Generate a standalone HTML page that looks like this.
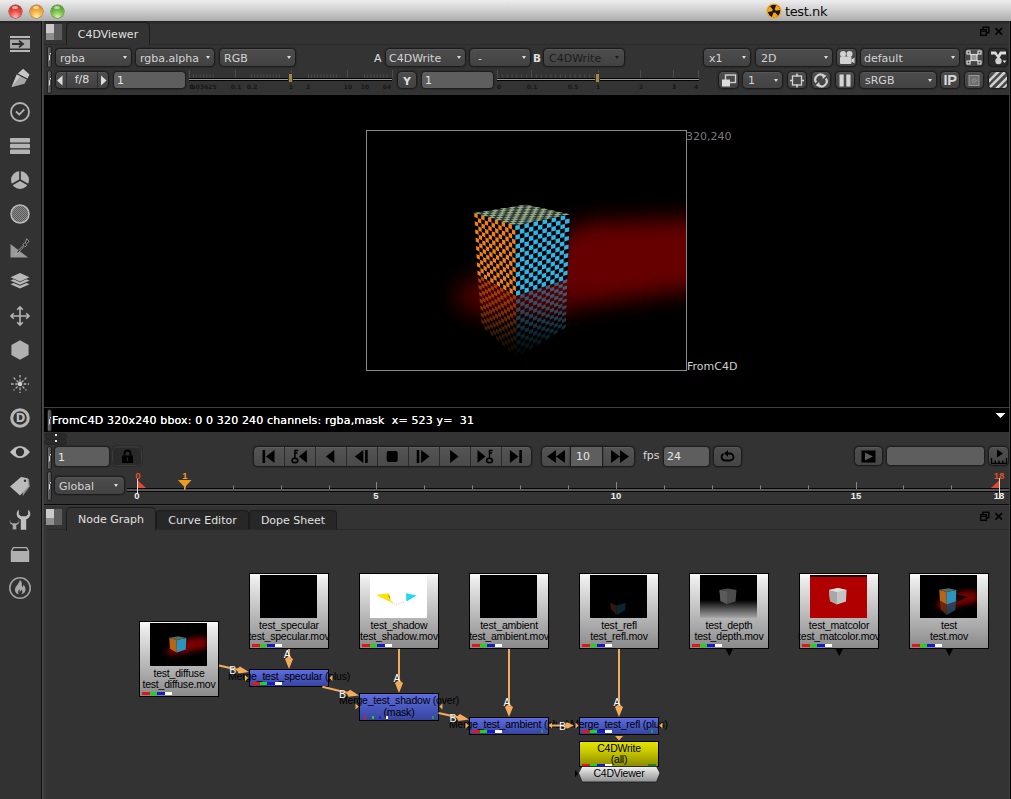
<!DOCTYPE html>
<html><head><meta charset="utf-8"><title>test.nk</title>
<style>
*{box-sizing:border-box;margin:0;padding:0}
html,body{width:1011px;height:799px;overflow:hidden;background:#333}
body{position:relative;font-family:"DejaVu Sans","Liberation Sans",sans-serif;font-size:11px;color:#d2d2d2}
.abs{position:absolute}
#title{position:absolute;left:0;top:0;width:1011px;height:21px;background:linear-gradient(#ededed,#d2d2d2 45%,#acacac)}
#title .t{position:absolute;left:785px;top:4px;font-size:13px;letter-spacing:-.4px;color:#0c0c0c;line-height:16px}
.light{position:absolute;top:4.5px;width:13px;height:13px;border-radius:50%}.light:after{content:"";position:absolute;left:3.5px;top:1px;width:6px;height:3.5px;border-radius:50%;background:rgba(255,255,255,.55);filter:blur(.6px)}
#main{position:absolute;left:0;top:21px;width:1011px;height:778px;background:#333}
#lbar{position:absolute;left:0;top:21px;width:41px;height:778px;background:linear-gradient(#222 0,#2a2a2a 2px,#323232 3.5px)}
#ldiv{position:absolute;left:41px;top:21px;width:1px;height:778px;background:#0e0e0e}
#ldiv2{position:absolute;left:42px;top:21px;width:5px;height:778px;background:linear-gradient(90deg,#484848 0,#484848 1px,#404040 1px,#404040 2px,#363636 2px)}
.dd,.btn{position:absolute;height:18px;border:1px solid #1b1b1b;border-radius:4.5px;background:linear-gradient(#4d4d4d,#424242);line-height:17px;color:#d4d4d4;white-space:nowrap;box-shadow:inset 0 1px 0 rgba(255,255,255,.06),0 0 1.5px rgba(0,0,0,.7)}
.dd span{position:absolute;left:4px;top:0}
.dd i{position:absolute;right:4px;top:7px;width:0;height:0;border-left:2.5px solid transparent;border-right:2.5px solid transparent;border-top:3px solid #dcdcdc}
.dd.dis{color:#1c1c1c}
.dd.dis i{border-top-color:#1c1c1c}
.inp{position:absolute;height:18px;border:1px solid #1e1e1e;box-shadow:0 0 1.5px rgba(0,0,0,.6);border-radius:4px;background:#5e5e5e;line-height:18px;color:#e6e6e6;padding-left:3px;white-space:nowrap}
.lbl{position:absolute;line-height:18px;color:#e0e0e0;white-space:nowrap}
.grip{position:absolute;width:5px;margin-left:1px;border-radius:3px;background:linear-gradient(90deg,#6c6c6c,#454545);border:1px solid #1e1e1e}
.grip:after{content:"";position:absolute;left:0px;top:50%;width:3px;height:8px;margin-top:-4px;background:linear-gradient(100deg,transparent 40%,#ddd 45%,#ddd 60%,transparent 65%)}
.tab{position:absolute;white-space:nowrap;text-align:center;color:#e0e0e0}
svg{position:absolute;overflow:visible}
.ntext{font-family:"Liberation Sans",sans-serif;font-size:10px;fill:#000;text-anchor:middle}
.tick{font-size:6px;color:#171717;font-weight:bold;position:absolute;white-space:nowrap;transform:translateX(-50%);line-height:8px}
.tl{position:absolute;font-family:"Liberation Sans",sans-serif;font-size:9.5px;font-weight:bold;color:#eee;transform:translateX(-50%);line-height:10px}
</style></head><body>
<div id="main"></div>
<div id="title">
<div class="light" style="left:8.5px;background:radial-gradient(circle at 50% 90%,#ffb4b0 0%,#ee4a44 45%,#b8201c 100%);box-shadow:0 0 0 .5px #8c2a26"></div>
<div class="light" style="left:29.5px;background:radial-gradient(circle at 50% 90%,#fff0a0 0%,#f6b040 45%,#d07418 100%);box-shadow:0 0 0 .5px #9a6420"></div>
<div class="light" style="left:50.5px;background:radial-gradient(circle at 50% 90%,#d4f4a8 0%,#78c048 45%,#3c8a22 100%);box-shadow:0 0 0 .5px #3a7424"></div>
<svg style="left:765.5px;top:2.700px" width="16" height="16" viewBox="0 0 16 16"><circle cx="8" cy="8" r="7.6" fill="#f3a51c"/><circle cx="8" cy="8" r="6.2" fill="#1a1408"/><path transform="rotate(20 8 8)" d="M8 8 L8 1.8 A6.2 6.2 0 0 1 13.4 4.9 Z M8 8 L13.4 11.1 A6.2 6.2 0 0 1 8 14.2 Z M8 8 L2.6 11.1 A6.2 6.2 0 0 1 2.6 4.9 Z" fill="#f3a51c"/><circle cx="8" cy="8" r="1.7" fill="#1a1408"/></svg>
<div class="t">test.nk</div>
</div>
<div id="lbar"></div><div id="ldiv"></div><div id="ldiv2"></div>
<!-- left toolbar icons -->
<svg style="left:8px;top:32px" width="24" height="24" viewBox="0 0 24 24"><g fill="#b8b8b8"><rect x="2" y="4" width="20" height="2"/><rect x="2" y="7.5" width="20" height="9" fill="#a8a8a8"/><rect x="2" y="18" width="20" height="2"/></g><path d="M4 12h10M11 8.8l4 3.2-4 3.2" stroke="#2e2e2e" stroke-width="1.8" fill="none"/></svg>
<svg style="left:8px;top:66px" width="24" height="24" viewBox="0 0 24 24"><path d="M9.800 7.400l5.400-4.600 6.300 5.800-2 3.800z" fill="#c6c6c6"/><path d="M8.800 8.600l10 4.800-2.300 4.400L3.500 21.200z" fill="#a6a6a6"/><path d="M8.800 8.600l3.600 1.700L3.500 21.200z" fill="#c8c8c8"/></svg>
<svg style="left:8px;top:100px" width="24" height="24" viewBox="0 0 24 24"><circle cx="12" cy="12" r="9" fill="none" stroke="#b4b4b4" stroke-width="1.8"/><path d="M8 11.5l3.3 3 5-5.2" stroke="#b4b4b4" stroke-width="1.8" fill="none"/></svg>
<svg style="left:8px;top:134px" width="24" height="24" viewBox="0 0 24 24"><g fill="#b4b4b4"><rect x="2" y="4" width="20" height="4.4" rx=".8"/><rect x="2" y="9.8" width="20" height="4.4" rx=".8"/><rect x="2" y="15.6" width="20" height="4.4" rx=".8"/></g></svg>
<svg style="left:8px;top:168px" width="24" height="24" viewBox="0 0 24 24"><circle cx="12" cy="12" r="9" fill="#b4b4b4"/><path d="M12 3v9l-7.8 4.5M12 12l7.8 4.5" stroke="#2e2e2e" stroke-width="1.6" fill="none"/></svg>
<svg style="left:8px;top:202px" width="24" height="24" viewBox="0 0 24 24"><defs><pattern id="ht" width="2" height="2" patternUnits="userSpaceOnUse"><rect width="2" height="2" fill="#8a8a8a"/><rect width="1" height="1" fill="#5a5a5a"/><rect x="1" y="1" width="1" height="1" fill="#5a5a5a"/></pattern></defs><circle cx="12" cy="12" r="9" fill="url(#ht)" stroke="#bcbcbc" stroke-width="1.5"/></svg>
<svg style="left:8px;top:236px" width="24" height="24" viewBox="0 0 24 24"><path d="M2.500 8v13.500h17.500z" fill="#9a9a9a"/><path d="M18.600 2.800l2.400 2.400-2.800 3.200.7.700-1.500 1.500-.8-.8-6 6.500-3 2 1.800-3.200 6.500-6-.8-.8 1.500-1.500.7.700z" fill="#1c1c1c" stroke="#c8c8c8" stroke-width=".7"/></svg>
<svg style="left:8px;top:270px" width="24" height="24" viewBox="0 0 24 24"><g fill="#b8b8b8"><path d="M12 3l9.5 4.2L12 11.4 2.500 7.2z"/><path d="M2.500 10.600l3-1.300 6.500 2.900 6.500-2.900 3 1.300-9.500 4.200z"/><path d="M2.500 14.200l3-1.300 6.500 2.900 6.500-2.900 3 1.300-9.500 4.200z"/></g></svg>
<svg style="left:8px;top:304px" width="24" height="24" viewBox="0 0 24 24"><path d="M12 3v18M3 12h18M9.200 5.800L12 3l2.800 2.800M9.200 18.200L12 21l2.800-2.800M5.800 9.200L3 12l2.800 2.800M18.200 9.200L21 12l-2.800 2.800" stroke="#b4b4b4" stroke-width="1.6" fill="none"/></svg>
<svg style="left:8px;top:338px" width="24" height="24" viewBox="0 0 24 24"><path d="M12 2.200l8.600 4.900v9.800L12 21.800l-8.600-4.900V7.100z" fill="#b0b0b0"/></svg>
<svg style="left:8px;top:372px" width="24" height="24" viewBox="0 0 24 24"><g stroke="#b4b4b4" stroke-width="1.300" stroke-dasharray="2.600 1.600"><path d="M12 3v18M3 12h18M5.600 5.600l12.800 12.800M18.400 5.600L5.600 18.400"/></g><circle cx="12" cy="12" r="2.200" fill="#d0d0d0"/></svg>
<svg style="left:8px;top:406px" width="24" height="24" viewBox="0 0 24 24"><circle cx="12" cy="12" r="8.300" fill="none" stroke="#b6b6b6" stroke-width="3"/><text x="12.400" y="16.300" font-family="DejaVu Sans,sans-serif" font-weight="bold" font-size="11.500" text-anchor="middle" fill="#bcbcbc">D</text></svg>
<svg style="left:8px;top:440px" width="24" height="24" viewBox="0 0 24 24"><path d="M2 12q10-12 20 0q-10 12-20 0z" fill="#c0c0c0"/><circle cx="12" cy="12" r="4.200" fill="#2e2e2e"/></svg>
<svg style="left:8px;top:474px" width="24" height="24" viewBox="0 0 24 24"><path d="M14 3.500l7 1.500.8 7.500-7 9.500z" fill="#8e8e8e"/><path d="M2 12.500L13 3l6.500 1.200 1 8L12 21.500z" fill="#bcbcbc"/><circle cx="17" cy="6.800" r="1.200" fill="#2e2e2e"/></svg>
<svg style="left:8px;top:508px" width="24" height="24" viewBox="0 0 24 24"><path d="M10.800 1.800C8.200 3.600 7.800 8 10.800 10.200L12.800 11.400V21.700H18.200V11.400L20.200 10.200C23.200 8 22.800 3.600 20.200 1.800V6.600L17.800 8.200H13.200L10.800 6.600Z" fill="#c0c0c0"/><path d="M2.600 11C1 12.600 1.200 15.400 3.200 16.600L4.400 17.200V21.700H8.600V17.200L9.800 16.600C11.800 15.400 12 12.600 10.400 11V14L8.600 15H4.400L2.600 14Z" fill="#a8a8a8" stroke="#323232" stroke-width=".6"/></svg>
<svg style="left:8px;top:542px" width="24" height="24" viewBox="0 0 24 24"><path d="M5 5h14l2.200 4v11H2.800V9z" fill="#b0b0b0"/><path d="M5.800 6.200h12.400l1.500 2.800H4.300z" fill="#2e2e2e"/></svg>
<svg style="left:8px;top:576px" width="24" height="24" viewBox="0 0 24 24"><circle cx="12" cy="12" r="10.200" fill="none" stroke="#a0a0a0" stroke-width="1.600"/><path d="M12.500 4.500c2.500 3 .5 4.500 2 6.500.8-.6 1-1.700.8-2.600 2.600 2.400 3 6.200.9 8.400-.9.900-2 1.400-3 1.500 1.500-1.200 1.600-3.200.2-4.800-.3 1.400-1.100 1.800-1.600 2.600-.4-.9-.3-2 .1-3-1.600 1-2.500 3.200-1.200 5.200-2.200-.4-4.200-2.600-3.600-5.600.5-2.700 3.600-4.200 4.400-8.200z" fill="#a8a8a8"/></svg>
<!-- viewer panel header -->
<div class="abs" style="left:44px;top:21px;width:966px;height:24px;background:linear-gradient(#232323 0,#2a2a2a 2px,#333 3.5px)"></div><div class="abs" style="left:44px;top:44px;width:965px;height:1px;background:#2a2a2a"></div>
<div class="abs" style="left:1009px;top:21px;width:1px;height:778px;background:#404040"></div><div class="abs" style="left:1010px;top:21px;width:1px;height:778px;background:#040404"></div>
<div class="abs" style="left:46px;top:24px;width:16px;height:16px;background:#5c5c5c"><div class="abs" style="left:0;top:0;width:8px;height:9px;background:#cacaca"></div><div class="abs" style="left:0;top:9px;width:8px;height:7px;background:#8e8e8e"></div></div>
<div class="tab" style="left:66px;top:22px;width:84px;height:24px;background:#333;border:1px solid #1c1c1c;border-bottom:none;border-radius:5px 5px 0 0;line-height:23px">C4DViewer</div>
<div class="abs" style="left:44px;top:45px;width:965px;height:50px;background:#333"></div>
<svg style="left:979px;top:26px" width="26" height="11" viewBox="0 0 26 11"><g fill="none" stroke="#050505" stroke-width="1.500"><path d="M4 3V1.200h5.800v5.600H8"/><rect x="1.700" y="3.700" width="5.600" height="5.600"/><path d="M1.700 5.400h5.600" stroke-width="1"/><path d="M16.500 2.200l6.500 6.500M23 2.200l-6.500 6.500" stroke-width="1.700"/></g></svg>
<div class="grip" style="left:46px;top:46px;height:22px"></div>
<div class="grip" style="left:46px;top:70px;height:24px"></div>
<!-- row 1 -->
<div class="dd" style="left:55px;top:48px;height:19px;line-height:19px;width:77px"><span>rgba</span><i></i></div>
<div class="dd" style="left:135px;top:48px;height:19px;line-height:19px;width:80px"><span style="left:4px">rgba.alpha</span><i style="right:4px"></i></div>
<div class="dd" style="left:219px;top:48px;height:19px;line-height:19px;width:77px"><span>RGB</span><i></i></div>
<div class="lbl" style="left:374px;top:49px;line-height:19px">A</div>
<div class="dd" style="left:385px;top:48px;height:19px;line-height:19px;width:81px"><span style="left:3px">C4DWrite</span><i></i></div>
<div class="dd" style="left:469px;top:48px;height:19px;line-height:19px;width:62px"><span style="left:8px">-</span><i></i></div>
<div class="lbl" style="left:533px;top:49px;line-height:19px;font-weight:bold;font-size:10.5px">B</div>
<div class="dd dis" style="left:543px;top:48px;height:19px;line-height:19px;width:82px"><span style="left:5px">C4DWrite</span><i style="right:5px"></i></div>
<div class="dd" style="left:703px;top:48px;height:19px;line-height:19px;width:48px"><span style="left:5px">x1</span><i></i></div>
<div class="dd" style="left:755px;top:48px;height:19px;line-height:19px;width:78px"><span style="left:5px">2D</span><i></i></div>
<div class="btn" style="left:836px;top:48px;height:19px;line-height:19px;width:21px"><svg style="left:1px;top:1px" width="17" height="15" viewBox="0 0 17 15"><g fill="#d2d2d2"><circle cx="5" cy="4" r="3"/><circle cx="11.500" cy="4" r="3"/><rect x="2" y="6.500" width="11.500" height="7.500" rx="1"/><path d="M13.500 9.500l3-2v6l-3-2z"/></g></svg></div>
<div class="dd" style="left:860px;top:48px;height:19px;line-height:19px;width:100px"><span style="left:3px">default</span><i></i></div>
<div class="btn" style="left:964px;top:48px;height:19px;line-height:19px;width:20px"><svg style="left:1px;top:1px" width="16" height="15" viewBox="0 0 16 15"><g fill="none" stroke="#d8d8d8" stroke-width="1.200"><rect x="5" y="4.500" width="6" height="6" fill="#9a9a9a"/><rect x="1" y="1" width="3" height="3"/><rect x="12" y="1" width="3" height="3"/><rect x="1" y="11" width="3" height="3"/><rect x="12" y="11" width="3" height="3"/><path d="M4 4l1.500 1M12 4l-1.500 1M4 11l1.500-1M12 11l-1.500-1"/></g></svg></div>
<div class="btn" style="left:988px;top:48px;height:19px;line-height:19px;width:20px;background:#2a2a2a"><svg style="left:1px;top:1px" width="17" height="15" viewBox="0 0 17 15"><path d="M1 1.500h5l2 3.500 2-3.500h6v3h-4.500L9.500 8v1.500h-2V8L5 4.500H1z" fill="#dcdcdc"/><circle cx="8.500" cy="11" r="3.200" fill="#d0d0d0"/><path d="M12.500 10.500h4l-2 2.500z" fill="#dcdcdc"/></svg></div>
<!-- row 2 -->
<div class="btn" style="left:55px;top:71px;width:54px"></div>
<div class="abs" style="left:66px;top:72px;width:1px;height:16px;background:#2c2c2c"></div>
<div class="abs" style="left:97px;top:72px;width:1px;height:16px;background:#2c2c2c"></div>
<svg style="left:56px;top:75px" width="52" height="11" viewBox="0 0 52 11"><path d="M1 5.500l5.500-5v10zM50.500 5.500l-5.500-5v10z" fill="#dedede"/></svg>
<div class="lbl" style="left:67px;top:71px;width:30px;text-align:center">f/8</div>
<div class="inp" style="left:113px;top:71px;width:73px">1</div>
<div class="btn" style="left:397px;top:71px;width:20px"><div class="lbl" style="left:0;top:1px;width:18px;text-align:center;font-size:10.5px;font-weight:bold;line-height:16px">Y</div></div>
<div class="inp" style="left:421px;top:71px;width:73px">1</div>
<div class="btn" style="left:718px;top:71px;width:21px"><svg style="left:1px;top:1px" width="17" height="15" viewBox="0 0 17 15"><rect x="5.500" y="2" width="10" height="7.500" fill="none" stroke="#d0d0d0" stroke-width="1.400"/><rect x="2" y="6.500" width="8" height="7" fill="#dcdcdc"/></svg></div>
<div class="dd" style="left:742px;top:71px;width:41px"><span style="left:5px">1</span><i></i></div>
<div class="btn" style="left:787px;top:71px;width:20px"><svg style="left:1px;top:1px" width="16" height="15" viewBox="0 0 16 15"><rect x="3.500" y="3" width="9" height="9" fill="none" stroke="#d4d4d4" stroke-width="1.300"/><path d="M8 .5v3M8 11.500v3M1 7.500h3M12 7.500h3" stroke="#d4d4d4" stroke-width="1.600"/></svg></div>
<div class="btn" style="left:811px;top:71px;width:20px"><svg style="left:1px;top:1px" width="16" height="15" viewBox="0 0 16 15"><g fill="none" stroke="#d0d0d0" stroke-width="2.200"><path d="M3.200 9.500A5 5 0 0 1 10.500 2.800"/><path d="M12.800 5.500A5 5 0 0 1 5.500 12.200"/></g><path d="M9 .5l4.500 2.200L9.800 6zM7 14.500L2.500 12.300 6.200 9z" fill="#d0d0d0"/></svg></div>
<div class="btn" style="left:835px;top:71px;width:20px"><svg style="left:1px;top:1px" width="16" height="15" viewBox="0 0 16 15"><rect x="2.500" y="1.500" width="4.200" height="12" fill="#d4d4d4"/><rect x="9.300" y="1.500" width="4.200" height="12" fill="#d4d4d4"/></svg></div>
<div class="dd" style="left:859px;top:71px;width:78px"><span style="left:5px">sRGB</span><i></i></div>
<div class="btn" style="left:940px;top:71px;width:20px"><div class="lbl" style="left:0;top:-1px;width:18px;text-align:center;font-weight:bold;font-size:14.5px;letter-spacing:-.3px;color:#d8d8d8;font-family:'Liberation Sans',sans-serif">IP</div></div>
<div class="btn" style="left:964px;top:71px;width:20px"><svg style="left:1px;top:1px" width="16" height="15" viewBox="0 0 16 15"><rect x="3" y="2.500" width="10" height="10" fill="#6e6e6e" stroke="#9a9a9a" stroke-width="1"/><path d="M6 10l4-5M8 10.500l3-3.800M5.500 8l2.500-3" stroke="#9a9a9a" stroke-width=".8"/></svg></div>
<div class="btn" style="left:988px;top:71px;width:20px;overflow:hidden"><svg style="left:1px;top:1px" width="16" height="15" viewBox="0 0 16 15"><g stroke="#cfcfcf" stroke-width="2.600"><path d="M-2 9L9 -2M-1 15L15 -1M5 17L18 4M11 18L19 10"/></g></svg></div>
<!-- sliders -->
<div class="abs" style="left:189px;top:78px;width:203px;height:3px;background:#9a9a9a;border-top:1px solid #050505;border-bottom:1px solid #050505"></div>
<svg style="left:0;top:0" width="1011" height="100"><path d="M193.5 74.5V78M196.8 74.5V78M200.1 74.5V78M203.4 74.5V78M206.7 74.5V78M210.0 74.5V78M213.3 74.5V78M251.5 74.5V78M254.6 74.5V78M257.7 74.5V78M260.8 74.5V78M263.9 74.5V78M267.0 74.5V78M270.1 74.5V78M273.2 74.5V78M276.3 74.5V78M279.4 74.5V78M308.5 74.5V78M311.6 74.5V78M314.7 74.5V78M317.8 74.5V78M320.9 74.5V78M324.0 74.5V78M327.1 74.5V78M330.2 74.5V78M333.3 74.5V78M336.4 74.5V78M364.5 74.5V78M367.7 74.5V78M370.9 74.5V78M374.1 74.5V78M377.3 74.5V78M380.5 74.5V78M383.7 74.5V78M386.9 74.5V78M189.5 70V78M235.5 70V78M291.5 70V78M347.5 70V78M392.5 70V78" stroke="#4c4c4c" stroke-width="1" fill="none"/></svg>
<div class="abs" style="left:288px;top:73px;width:5px;height:10px;background:#9b8550;border:1px solid #3a3018;border-radius:1px"></div>
<div class="tick" style="left:193px;top:83px">0</div>
<div class="tick" style="left:203px;top:83px">0.03625</div>
<div class="tick" style="left:236px;top:83px">0.1</div>
<div class="tick" style="left:252px;top:83px">0.2</div>
<div class="tick" style="left:291px;top:83px">1</div>
<div class="tick" style="left:308px;top:83px">2</div>
<div class="tick" style="left:348px;top:83px">10</div>
<div class="tick" style="left:365px;top:83px">20</div>
<div class="tick" style="left:387px;top:83px">64</div>
<div class="abs" style="left:497px;top:78px;width:202px;height:3px;background:#9a9a9a;border-top:1px solid #050505;border-bottom:1px solid #050505"></div>
<svg style="left:0;top:0" width="1011" height="100"><path d="M502.4 74.5V78M507.2 74.5V78M512.1 74.5V78M516.9 74.5V78M521.8 74.5V78M526.6 74.5V78M531.5 74.5V78M536.3 74.5V78M541.2 74.5V78M546.0 74.5V78M550.9 74.5V78M555.7 74.5V78M560.6 74.5V78M565.4 74.5V78M570.3 74.5V78M575.1 74.5V78M580.0 74.5V78M584.8 74.5V78M589.7 74.5V78M594.5 74.5V78M497.5 70V78M531.5 70V78M598.5 70V78M640.5 70V78M673.5 70V78M698.5 70V78" stroke="#4c4c4c" stroke-width="1" fill="none"/></svg>
<div class="abs" style="left:595px;top:73px;width:5px;height:10px;background:#9b8550;border:1px solid #3a3018;border-radius:1px"></div>
<div class="tick" style="left:499px;top:83px">0</div>
<div class="tick" style="left:532px;top:83px">0.1</div>
<div class="tick" style="left:573px;top:83px">0.5</div>
<div class="tick" style="left:598px;top:83px">1</div>
<div class="tick" style="left:641px;top:83px">2</div>
<div class="tick" style="left:674px;top:83px">3</div>
<div class="tick" style="left:696px;top:83px">4</div>
<!-- viewer -->
<div class="abs" style="left:44px;top:95px;width:965px;height:312px;background:#000"></div>
<div class="abs" style="left:44px;top:407px;width:965px;height:1px;background:#404040"></div>
<div class="abs" style="left:44px;top:408px;width:965px;height:24px;background:#000"></div>
<svg style="left:0;top:0" width="1011" height="799" viewBox="0 0 1011 799">
<defs>
<clipPath id="fr"><rect x="366.5" y="130.5" width="320" height="240"/></clipPath>
<filter id="b8" x="-30%" y="-50%" width="160%" height="200%"><feGaussianBlur stdDeviation="11"/></filter>
<filter id="b1" x="-5%" y="-5%" width="110%" height="110%"><feGaussianBlur stdDeviation="0.7"/></filter>
<linearGradient id="rg" x1="0" y1="275" x2="0" y2="358" gradientUnits="userSpaceOnUse"><stop offset="0" stop-color="#fff" stop-opacity=".58"/><stop offset=".55" stop-color="#fff" stop-opacity=".32"/><stop offset="1" stop-color="#fff" stop-opacity="0"/></linearGradient>
<mask id="rm" maskUnits="userSpaceOnUse" x="440" y="260" width="160" height="110"><rect x="440" y="260" width="160" height="110" fill="url(#rg)"/></mask>
</defs>
<g id="scene">
<g clip-path="url(#fr)"><path d="M710 218L584 222L540 250L530 300L580 306L710 287Z" fill="#660000" filter="url(#b8)"/><path d="M545 250L462 284L454 299L472 315L575 310Z" fill="#4e0000" filter="url(#b8)"/></g>
<g filter="url(#b1)">
<path d="M474.200 213L526 204.600L569.800 214.300L567.300 279L516 296L477.600 274.600Z" fill="#020202"/>
<g id="cubeg">
<path d="M474.2 213.0L477.6 214.1L477.8 218.2L474.4 217.1ZM474.7 221.2L478.0 222.4L478.3 226.5L474.9 225.3ZM475.1 229.4L478.5 230.7L478.7 234.8L475.3 233.5ZM475.6 237.6L478.9 239.0L479.1 243.1L475.8 241.7ZM476.0 245.9L479.3 247.3L479.5 251.4L476.2 250.0ZM476.5 254.1L479.7 255.6L480.0 259.8L476.7 258.2ZM476.9 262.3L480.2 263.9L480.4 268.1L477.1 266.4ZM477.4 270.5L480.6 272.2L480.8 276.4L477.6 274.6ZM477.8 218.2L481.2 219.3L481.4 223.5L478.0 222.4ZM478.3 226.5L481.6 227.7L481.8 231.9L478.5 230.7ZM478.7 234.8L482.0 236.1L482.2 240.3L478.9 239.0ZM479.1 243.1L482.4 244.5L482.6 248.7L479.3 247.3ZM479.5 251.4L482.8 252.9L483.0 257.1L479.7 255.6ZM480.0 259.8L483.2 261.3L483.4 265.6L480.2 263.9ZM480.4 268.1L483.6 269.8L483.8 274.0L480.6 272.2ZM481.1 215.1L484.5 216.2L484.7 220.4L481.2 219.3ZM481.4 223.5L484.8 224.7L485.0 228.9L481.6 227.7ZM481.8 231.9L485.2 233.2L485.4 237.4L482.0 236.1ZM482.2 240.3L485.6 241.7L485.7 245.9L482.4 244.5ZM482.6 248.7L485.9 250.2L486.1 254.4L482.8 252.9ZM483.0 257.1L486.3 258.7L486.5 262.9L483.2 261.3ZM483.4 265.6L486.7 267.2L486.8 271.4L483.6 269.8ZM483.8 274.0L487.0 275.7L487.2 280.0L484.0 278.2ZM484.7 220.4L488.1 221.5L488.2 225.8L484.8 224.7ZM485.0 228.9L488.4 230.1L488.6 234.4L485.2 233.2ZM485.4 237.4L488.7 238.7L488.9 243.0L485.6 241.7ZM485.7 245.9L489.1 247.3L489.2 251.6L485.9 250.2ZM486.1 254.4L489.4 255.9L489.6 260.2L486.3 258.7ZM486.5 262.9L489.7 264.5L489.9 268.8L486.7 267.2ZM486.8 271.4L490.1 273.1L490.2 277.4L487.0 275.7ZM487.9 217.2L491.3 218.2L491.5 222.6L488.1 221.5ZM488.2 225.8L491.6 227.0L491.8 231.3L488.4 230.1ZM488.6 234.4L491.9 235.7L492.1 240.0L488.7 238.7ZM488.9 243.0L492.2 244.4L492.4 248.7L489.1 247.3ZM489.2 251.6L492.5 253.1L492.7 257.4L489.4 255.9ZM489.6 260.2L492.8 261.8L493.0 266.1L489.7 264.5ZM489.9 268.8L493.1 270.5L493.3 274.8L490.1 273.1ZM490.2 277.4L493.4 279.2L493.6 283.5L490.4 281.7ZM491.5 222.6L494.9 223.7L495.0 228.1L491.6 227.0ZM491.8 231.3L495.2 232.5L495.3 236.9L491.9 235.7ZM492.1 240.0L495.4 241.3L495.6 245.7L492.2 244.4ZM492.4 248.7L495.7 250.1L495.8 254.5L492.5 253.1ZM492.7 257.4L496.0 258.9L496.1 263.3L492.8 261.8ZM493.0 266.1L496.3 267.7L496.4 272.1L493.1 270.5ZM493.3 274.8L496.5 276.5L496.7 280.9L493.4 279.2ZM494.8 219.3L498.2 220.3L498.3 224.8L494.9 223.7ZM495.0 228.1L498.4 229.2L498.5 233.7L495.2 232.5ZM495.3 236.9L498.7 238.1L498.8 242.6L495.4 241.3ZM495.6 245.7L498.9 247.0L499.0 251.5L495.7 250.1ZM495.8 254.5L499.1 255.9L499.3 260.4L496.0 258.9ZM496.1 263.3L499.4 264.8L499.5 269.3L496.3 267.7ZM496.4 272.1L499.6 273.7L499.8 278.2L496.5 276.5ZM496.7 280.9L499.9 282.6L500.0 287.1L496.8 285.3ZM498.3 224.8L501.7 225.9L501.8 230.4L498.4 229.2ZM498.5 233.7L501.9 234.9L502.0 239.4L498.7 238.1ZM498.8 242.6L502.1 243.9L502.2 248.4L498.9 247.0ZM499.0 251.5L502.3 252.9L502.5 257.4L499.1 255.9ZM499.3 260.4L502.6 261.9L502.7 266.4L499.4 264.8ZM499.5 269.3L502.8 270.9L502.9 275.4L499.6 273.7ZM499.8 278.2L503.0 279.9L503.1 284.4L499.9 282.6ZM501.6 221.4L505.0 222.4L505.1 227.0L501.7 225.9ZM501.8 230.4L505.2 231.5L505.3 236.1L501.9 234.9ZM502.0 239.4L505.4 240.6L505.5 245.2L502.1 243.9ZM502.2 248.4L505.6 249.7L505.7 254.3L502.3 252.9ZM502.5 257.4L505.8 258.8L505.8 263.4L502.6 261.9ZM502.7 266.4L505.9 267.9L506.0 272.5L502.8 270.9ZM502.9 275.4L506.1 277.0L506.2 281.6L503.0 279.9ZM503.1 284.4L506.3 286.1L506.4 290.6L503.2 288.9ZM505.1 227.0L508.5 228.1L508.6 232.7L505.2 231.5ZM505.3 236.1L508.7 237.3L508.8 241.9L505.4 240.6ZM505.5 245.2L508.8 246.5L508.9 251.1L505.6 249.7ZM505.7 254.3L509.0 255.7L509.1 260.3L505.8 258.8ZM505.8 263.4L509.1 264.9L509.2 269.5L505.9 267.9ZM506.0 272.5L509.3 274.1L509.4 278.6L506.1 277.0ZM506.2 281.6L509.4 283.2L509.5 287.8L506.3 286.1ZM508.4 223.5L511.9 224.5L511.9 229.2L508.5 228.1ZM508.6 232.7L512.0 233.8L512.1 238.5L508.7 237.3ZM508.8 241.9L512.1 243.1L512.2 247.8L508.8 246.5ZM508.9 251.1L512.2 252.4L512.3 257.1L509.0 255.7ZM509.1 260.3L512.4 261.7L512.4 266.4L509.1 264.9ZM509.2 269.5L512.5 271.0L512.6 275.6L509.3 274.1ZM509.4 278.6L512.6 280.3L512.7 284.9L509.4 283.2ZM509.5 287.8L512.7 289.6L512.8 294.2L509.6 292.4ZM511.9 229.2L515.3 230.3L515.4 235.0L512.0 233.8ZM512.1 238.5L515.4 239.7L515.5 244.4L512.1 243.1ZM512.2 247.8L515.5 249.1L515.6 253.8L512.2 252.4ZM512.3 257.1L515.6 258.5L515.7 263.1L512.4 261.7ZM512.4 266.4L515.7 267.8L515.8 272.5L512.5 271.0ZM512.6 275.6L515.8 277.2L515.9 281.9L512.6 280.3ZM512.7 284.9L515.9 286.6L516.0 291.3L512.7 289.6Z" fill="#f2801c"/>
<path d="M515.3 225.6L519.8 224.7L519.9 229.3L515.3 230.3ZM515.4 235.0L519.9 234.0L519.9 238.6L515.4 239.7ZM515.5 244.4L520.0 243.3L520.0 248.0L515.5 249.1ZM515.6 253.8L520.0 252.6L520.0 257.3L515.6 258.5ZM515.7 263.1L520.1 262.0L520.1 266.6L515.7 267.8ZM515.8 272.5L520.1 271.3L520.2 275.9L515.8 277.2ZM515.9 281.9L520.2 280.6L520.2 285.3L515.9 286.6ZM516.0 291.3L520.2 289.9L520.3 294.6L516.0 296.0ZM519.9 229.3L524.4 228.3L524.4 233.0L519.9 234.0ZM519.9 238.6L524.4 237.6L524.4 242.2L520.0 243.3ZM520.0 248.0L524.4 246.9L524.5 251.5L520.0 252.6ZM520.0 257.3L524.5 256.1L524.5 260.8L520.1 262.0ZM520.1 266.6L524.5 265.4L524.5 270.0L520.1 271.3ZM520.2 275.9L524.5 274.6L524.5 279.3L520.2 280.6ZM520.2 285.3L524.5 283.9L524.5 288.5L520.2 289.9ZM524.4 223.7L528.9 222.8L528.9 227.4L524.4 228.3ZM524.4 233.0L528.9 232.0L528.9 236.6L524.4 237.6ZM524.4 242.2L528.9 241.2L528.9 245.8L524.4 246.9ZM524.5 251.5L528.9 250.4L528.9 255.0L524.5 256.1ZM524.5 260.8L528.9 259.6L528.9 264.2L524.5 265.4ZM524.5 270.0L528.9 268.8L528.9 273.4L524.5 274.6ZM524.5 279.3L528.8 278.0L528.8 282.6L524.5 283.9ZM524.5 288.5L528.8 287.2L528.8 291.8L524.5 293.2ZM528.9 227.4L533.4 226.4L533.4 231.0L528.9 232.0ZM528.9 236.6L533.4 235.5L533.4 240.1L528.9 241.2ZM528.9 245.8L533.3 244.7L533.3 249.2L528.9 250.4ZM528.9 255.0L533.3 253.8L533.3 258.4L528.9 259.6ZM528.9 264.2L533.2 262.9L533.2 267.5L528.9 268.8ZM528.9 273.4L533.2 272.1L533.2 276.6L528.8 278.0ZM528.8 282.6L533.1 281.2L533.1 285.8L528.8 287.2ZM533.5 221.8L538.0 220.9L538.0 225.4L533.4 226.4ZM533.4 231.0L537.9 230.0L537.9 234.5L533.4 235.5ZM533.4 240.1L537.8 239.0L537.8 243.6L533.3 244.7ZM533.3 249.2L537.8 248.1L537.7 252.6L533.3 253.8ZM533.3 258.4L537.7 257.2L537.6 261.7L533.2 262.9ZM533.2 267.5L537.6 266.2L537.5 270.8L533.2 272.1ZM533.2 276.6L537.5 275.3L537.5 279.8L533.1 281.2ZM533.1 285.8L537.4 284.4L537.4 288.9L533.1 290.3ZM538.0 225.4L542.5 224.5L542.4 229.0L537.9 230.0ZM537.9 234.5L542.4 233.5L542.3 238.0L537.8 239.0ZM537.8 243.6L542.2 242.5L542.2 247.0L537.8 248.1ZM537.7 252.6L542.1 251.5L542.1 256.0L537.7 257.2ZM537.6 261.7L542.0 260.5L542.0 265.0L537.6 266.2ZM537.5 270.8L541.9 269.5L541.8 274.0L537.5 275.3ZM537.5 279.8L541.8 278.5L541.7 283.0L537.4 284.4ZM542.5 219.9L547.1 219.0L547.0 223.5L542.5 224.5ZM542.4 229.0L546.9 228.0L546.9 232.4L542.4 233.5ZM542.3 238.0L546.8 236.9L546.7 241.4L542.2 242.5ZM542.2 247.0L546.6 245.8L546.5 250.3L542.1 251.5ZM542.1 256.0L546.5 254.8L546.4 259.3L542.0 260.5ZM542.0 265.0L546.3 263.7L546.2 268.2L541.9 269.5ZM541.8 274.0L546.2 272.7L546.1 277.1L541.8 278.5ZM541.7 283.0L546.0 281.6L545.9 286.1L541.6 287.5ZM547.0 223.5L551.5 222.5L551.4 226.9L546.9 228.0ZM546.9 232.4L551.3 231.4L551.3 235.8L546.8 236.9ZM546.7 241.4L551.2 240.3L551.1 244.7L546.6 245.8ZM546.5 250.3L551.0 249.1L550.9 253.6L546.5 254.8ZM546.4 259.3L550.8 258.0L550.7 262.5L546.3 263.7ZM546.2 268.2L550.6 266.9L550.5 271.3L546.2 272.7ZM546.1 277.1L550.4 275.8L550.3 280.2L546.0 281.6ZM551.6 218.1L556.2 217.1L556.1 221.5L551.5 222.5ZM551.4 226.9L555.9 225.9L555.8 230.4L551.3 231.4ZM551.3 235.8L555.7 234.8L555.6 239.2L551.2 240.3ZM551.1 244.7L555.5 243.6L555.4 248.0L551.0 249.1ZM550.9 253.6L555.3 252.4L555.2 256.8L550.8 258.0ZM550.7 262.5L555.0 261.2L554.9 265.6L550.6 266.9ZM550.5 271.3L554.8 270.0L554.7 274.4L550.4 275.8ZM550.3 280.2L554.6 278.8L554.5 283.2L550.2 284.7ZM556.1 221.5L560.6 220.6L560.5 224.9L555.9 225.9ZM555.8 230.4L560.3 229.3L560.2 233.7L555.7 234.8ZM555.6 239.2L560.1 238.1L559.9 242.4L555.5 243.6ZM555.4 248.0L559.8 246.8L559.7 251.2L555.3 252.4ZM555.2 256.8L559.5 255.6L559.4 259.9L555.0 261.2ZM554.9 265.6L559.3 264.3L559.1 268.7L554.8 270.0ZM554.7 274.4L559.0 273.1L558.9 277.5L554.6 278.8ZM560.7 216.2L565.3 215.2L565.1 219.6L560.6 220.6ZM560.5 224.9L565.0 223.9L564.8 228.3L560.3 229.3ZM560.2 233.7L564.7 232.6L564.5 237.0L560.1 238.1ZM559.9 242.4L564.4 241.3L564.2 245.7L559.8 246.8ZM559.7 251.2L564.1 250.0L563.9 254.3L559.5 255.6ZM559.4 259.9L563.8 258.7L563.6 263.0L559.3 264.3ZM559.1 268.7L563.5 267.4L563.3 271.7L559.0 273.1ZM558.9 277.5L563.2 276.1L563.0 280.4L558.8 281.8ZM565.1 219.6L569.6 218.6L569.5 222.9L565.0 223.9ZM564.8 228.3L569.3 227.2L569.1 231.6L564.7 232.6ZM564.5 237.0L569.0 235.9L568.8 240.2L564.4 241.3ZM564.2 245.7L568.6 244.5L568.5 248.8L564.1 250.0ZM563.9 254.3L568.3 253.1L568.1 257.4L563.8 258.7ZM563.6 263.0L568.0 261.7L567.8 266.1L563.5 267.4ZM563.3 271.7L567.6 270.4L567.5 274.7L563.2 276.1Z" fill="#2fb6e8"/>
<path d="M474.200 213L526 204.600L569.800 214.300L515.300 225.600Z" fill="#2c342c"/>
<path d="M474.2 213.0L478.5 212.3L482.0 213.3L477.6 214.1ZM481.1 215.1L485.4 214.4L488.8 215.4L484.5 216.2ZM487.9 217.2L492.3 216.4L495.7 217.4L491.3 218.2ZM494.8 219.3L499.2 218.5L502.6 219.5L498.2 220.3ZM501.6 221.4L506.1 220.5L509.5 221.6L505.0 222.4ZM508.4 223.5L513.0 222.6L516.4 223.6L511.9 224.5ZM482.0 213.3L486.3 212.6L489.8 213.6L485.4 214.4ZM488.8 215.4L493.2 214.6L496.7 215.6L492.3 216.4ZM495.7 217.4L500.1 216.6L503.6 217.7L499.2 218.5ZM502.6 219.5L507.1 218.7L510.5 219.7L506.1 220.5ZM509.5 221.6L514.0 220.7L517.5 221.7L513.0 222.6ZM516.4 223.6L520.9 222.7L524.4 223.7L519.8 224.7ZM482.8 211.6L487.1 210.9L490.6 211.9L486.3 212.6ZM489.8 213.6L494.1 212.9L497.6 213.9L493.2 214.6ZM496.7 215.6L501.1 214.9L504.6 215.8L500.1 216.6ZM503.6 217.7L508.0 216.8L511.5 217.8L507.1 218.7ZM510.5 219.7L515.0 218.8L518.5 219.8L514.0 220.7ZM517.5 221.7L522.0 220.8L525.4 221.8L520.9 222.7ZM490.6 211.9L495.0 211.2L498.5 212.1L494.1 212.9ZM497.6 213.9L502.0 213.1L505.5 214.1L501.1 214.9ZM504.6 215.8L509.0 215.0L512.5 216.0L508.0 216.8ZM511.5 217.8L516.0 217.0L519.5 218.0L515.0 218.8ZM518.5 219.8L523.0 218.9L526.5 219.9L522.0 220.8ZM525.4 221.8L530.0 220.9L533.5 221.8L528.9 222.8ZM491.5 210.2L495.8 209.5L499.3 210.4L495.0 211.2ZM498.5 212.1L502.8 211.4L506.3 212.3L502.0 213.1ZM505.5 214.1L509.9 213.3L513.4 214.2L509.0 215.0ZM512.5 216.0L516.9 215.2L520.4 216.1L516.0 217.0ZM519.5 218.0L523.9 217.1L527.5 218.0L523.0 218.9ZM526.5 219.9L531.0 219.0L534.5 219.9L530.0 220.9ZM499.3 210.4L503.6 209.7L507.2 210.7L502.8 211.4ZM506.3 212.3L510.7 211.6L514.2 212.5L509.9 213.3ZM513.4 214.2L517.8 213.4L521.3 214.4L516.9 215.2ZM520.4 216.1L524.9 215.3L528.4 216.2L523.9 217.1ZM527.5 218.0L531.9 217.2L535.5 218.1L531.0 219.0ZM534.5 219.9L539.0 219.0L542.5 219.9L538.0 220.9ZM500.1 208.8L504.4 208.1L508.0 209.0L503.6 209.7ZM507.2 210.7L511.5 209.9L515.1 210.8L510.7 211.6ZM514.2 212.5L518.6 211.7L522.2 212.6L517.8 213.4ZM521.3 214.4L525.8 213.6L529.3 214.5L524.9 215.3ZM528.4 216.2L532.9 215.4L536.4 216.3L531.9 217.2ZM535.5 218.1L540.0 217.2L543.5 218.1L539.0 219.0ZM508.0 209.0L512.3 208.3L515.9 209.2L511.5 209.9ZM515.1 210.8L519.5 210.1L523.0 211.0L518.6 211.7ZM522.2 212.6L526.6 211.8L530.2 212.7L525.8 213.6ZM529.3 214.5L533.8 213.6L537.3 214.5L532.9 215.4ZM536.4 216.3L540.9 215.4L544.5 216.3L540.0 217.2ZM543.5 218.1L548.1 217.2L551.6 218.1L547.1 219.0ZM508.7 207.4L513.0 206.7L516.6 207.6L512.3 208.3ZM515.9 209.2L520.2 208.4L523.8 209.3L519.5 210.1ZM523.0 211.0L527.4 210.2L531.0 211.0L526.6 211.8ZM530.2 212.7L534.6 211.9L538.2 212.8L533.8 213.6ZM537.3 214.5L541.8 213.7L545.4 214.5L540.9 215.4ZM544.5 216.3L549.0 215.4L552.6 216.3L548.1 217.2ZM516.6 207.6L521.0 206.8L524.6 207.7L520.2 208.4ZM523.8 209.3L528.2 208.5L531.8 209.4L527.4 210.2ZM531.0 211.0L535.4 210.2L539.0 211.1L534.6 211.9ZM538.2 212.8L542.7 211.9L546.3 212.8L541.8 213.7ZM545.4 214.5L549.9 213.6L553.5 214.5L549.0 215.4ZM552.6 216.3L557.1 215.3L560.7 216.2L556.2 217.1ZM517.4 206.0L521.7 205.3L525.3 206.1L521.0 206.8ZM524.6 207.7L528.9 207.0L532.6 207.8L528.2 208.5ZM531.8 209.4L536.2 208.6L539.8 209.4L535.4 210.2ZM539.0 211.1L543.5 210.3L547.1 211.1L542.7 211.9ZM546.3 212.8L550.7 211.9L554.4 212.8L549.9 213.6ZM553.5 214.5L558.0 213.6L561.6 214.4L557.1 215.3ZM525.3 206.1L529.6 205.4L533.3 206.2L528.9 207.0ZM532.6 207.8L537.0 207.0L540.6 207.8L536.2 208.6ZM539.8 209.4L544.2 208.6L547.9 209.4L543.5 210.3ZM547.1 211.1L551.5 210.3L555.2 211.1L550.7 211.9ZM554.4 212.8L558.8 211.9L562.5 212.7L558.0 213.6ZM561.6 214.4L566.1 213.5L569.8 214.3L565.3 215.2Z" fill="#98b090"/>
</g>
<g id="cuber" mask="url(#rm)">
<path d="M477.9 278.0L481.1 279.9L481.3 283.4L478.2 281.5ZM478.4 284.9L481.6 286.8L481.8 290.3L478.7 288.3ZM479.0 291.7L482.1 293.8L482.4 297.3L479.3 295.2ZM479.6 298.6L482.6 300.8L482.9 304.3L479.8 302.0ZM480.1 305.4L483.1 307.8L483.4 311.2L480.4 308.9ZM480.7 312.3L483.7 314.7L483.9 318.2L481.0 315.7ZM481.2 319.1L484.2 321.7L484.4 325.2L481.5 322.6ZM480.8 276.4L484.0 278.2L484.2 281.7L481.1 279.9ZM481.3 283.4L484.5 285.3L484.7 288.8L481.6 286.8ZM481.8 290.3L485.0 292.3L485.2 295.9L482.1 293.8ZM482.4 297.3L485.4 299.4L485.7 303.0L482.6 300.8ZM482.9 304.3L485.9 306.5L486.2 310.1L483.1 307.8ZM483.4 311.2L486.4 313.6L486.6 317.2L483.7 314.7ZM483.9 318.2L486.9 320.7L487.1 324.2L484.2 321.7ZM484.4 325.2L487.4 327.8L487.6 331.3L484.7 328.7ZM484.2 281.7L487.4 283.6L487.6 287.2L484.5 285.3ZM484.7 288.8L487.9 290.8L488.1 294.4L485.0 292.3ZM485.2 295.9L488.3 298.0L488.5 301.6L485.4 299.4ZM485.7 303.0L488.7 305.2L489.0 308.8L485.9 306.5ZM486.2 310.1L489.2 312.4L489.4 316.0L486.4 313.6ZM486.6 317.2L489.6 319.6L489.8 323.2L486.9 320.7ZM487.1 324.2L490.1 326.8L490.3 330.4L487.4 327.8ZM487.2 280.0L490.4 281.7L490.6 285.4L487.4 283.6ZM487.6 287.2L490.8 289.1L491.0 292.7L487.9 290.8ZM488.1 294.4L491.2 296.4L491.4 300.0L488.3 298.0ZM488.5 301.6L491.6 303.7L491.8 307.4L488.7 305.2ZM489.0 308.8L492.0 311.0L492.2 314.7L489.2 312.4ZM489.4 316.0L492.4 318.4L492.6 322.0L489.6 319.6ZM489.8 323.2L492.8 325.7L493.0 329.3L490.1 326.8ZM490.3 330.4L493.2 333.0L493.4 336.7L490.5 334.0ZM490.6 285.4L493.8 287.2L494.0 291.0L490.8 289.1ZM491.0 292.7L494.1 294.7L494.3 298.4L491.2 296.4ZM491.4 300.0L494.5 302.1L494.7 305.8L491.6 303.7ZM491.8 307.4L494.9 309.6L495.0 313.3L492.0 311.0ZM492.2 314.7L495.2 317.0L495.4 320.7L492.4 318.4ZM492.6 322.0L495.6 324.4L495.8 328.2L492.8 325.7ZM493.0 329.3L495.9 331.9L496.1 335.6L493.2 333.0ZM493.6 283.5L496.8 285.3L497.0 289.1L493.8 287.2ZM494.0 291.0L497.1 292.9L497.3 296.6L494.1 294.7ZM494.3 298.4L497.4 300.4L497.6 304.2L494.5 302.1ZM494.7 305.8L497.8 308.0L497.9 311.8L494.9 309.6ZM495.0 313.3L498.1 315.5L498.2 319.3L495.2 317.0ZM495.4 320.7L498.4 323.1L498.6 326.9L495.6 324.4ZM495.8 328.2L498.7 330.7L498.9 334.4L495.9 331.9ZM496.1 335.6L499.0 338.2L499.2 342.0L496.3 339.3ZM497.0 289.1L500.1 290.9L500.3 294.8L497.1 292.9ZM497.3 296.6L500.4 298.6L500.6 302.4L497.4 300.4ZM497.6 304.2L500.7 306.3L500.8 310.1L497.8 308.0ZM497.9 311.8L501.0 314.0L501.1 317.8L498.1 315.5ZM498.2 319.3L501.3 321.6L501.4 325.5L498.4 323.1ZM498.6 326.9L501.5 329.3L501.7 333.1L498.7 330.7ZM498.9 334.4L501.8 337.0L502.0 340.8L499.0 338.2ZM500.0 287.1L503.2 288.9L503.3 292.8L500.1 290.9ZM500.3 294.8L503.4 296.7L503.6 300.6L500.4 298.6ZM500.6 302.4L503.7 304.5L503.8 308.4L500.7 306.3ZM500.8 310.1L503.9 312.3L504.0 316.2L501.0 314.0ZM501.1 317.8L504.2 320.0L504.3 323.9L501.3 321.6ZM501.4 325.5L504.4 327.8L504.5 331.7L501.5 329.3ZM501.7 333.1L504.6 335.6L504.8 339.5L501.8 337.0ZM502.0 340.8L504.9 343.4L505.0 347.3L502.1 344.7ZM503.3 292.8L506.5 294.6L506.6 298.6L503.4 296.7ZM503.6 300.6L506.7 302.5L506.8 306.5L503.7 304.5ZM503.8 308.4L506.9 310.4L507.0 314.4L503.9 312.3ZM504.0 316.2L507.1 318.3L507.2 322.3L504.2 320.0ZM504.3 323.9L507.3 326.3L507.4 330.2L504.4 327.8ZM504.5 331.7L507.5 334.2L507.6 338.1L504.6 335.6ZM504.8 339.5L507.7 342.1L507.8 346.0L504.9 343.4ZM506.4 290.6L509.6 292.4L509.7 296.4L506.5 294.6ZM506.6 298.6L509.8 300.5L509.8 304.5L506.7 302.5ZM506.8 306.5L509.9 308.5L510.0 312.5L506.9 310.4ZM507.0 314.4L510.1 316.5L510.2 320.5L507.1 318.3ZM507.2 322.3L510.2 324.6L510.3 328.6L507.3 326.3ZM507.4 330.2L510.4 332.6L510.5 336.6L507.5 334.2ZM507.6 338.1L510.6 340.6L510.6 344.6L507.7 342.1ZM507.8 346.0L510.7 348.7L510.8 352.7L507.9 350.0ZM509.7 296.4L512.9 298.3L512.9 302.4L509.8 300.5ZM509.8 304.5L513.0 306.4L513.0 310.5L509.9 308.5ZM510.0 312.5L513.1 314.6L513.2 318.7L510.1 316.5ZM510.2 320.5L513.2 322.7L513.3 326.8L510.2 324.6ZM510.3 328.6L513.3 330.9L513.4 335.0L510.4 332.6ZM510.5 336.6L513.5 339.0L513.5 343.1L510.6 340.6ZM510.6 344.6L513.6 347.2L513.6 351.3L510.7 348.7ZM512.8 294.2L516.0 296.0L516.0 300.1L512.9 298.3ZM512.9 302.4L516.1 304.3L516.1 308.4L513.0 306.4ZM513.0 310.5L516.2 312.5L516.2 316.7L513.1 314.6ZM513.2 318.7L516.2 320.8L516.3 324.9L513.2 322.7ZM513.3 326.8L516.3 329.1L516.4 333.2L513.3 330.9ZM513.4 335.0L516.4 337.3L516.4 341.5L513.5 339.0ZM513.5 343.1L516.5 345.6L516.5 349.7L513.6 347.2ZM513.6 351.3L516.6 353.9L516.6 358.0L513.7 355.3Z" fill="#f2801c"/>
<path d="M516.0 300.1L520.3 298.6L520.3 302.7L516.1 304.3ZM516.1 308.4L520.4 306.8L520.4 310.8L516.2 312.5ZM516.2 316.7L520.4 314.9L520.4 318.9L516.2 320.8ZM516.3 324.9L520.5 323.0L520.5 327.0L516.3 329.1ZM516.4 333.2L520.5 331.1L520.6 335.2L516.4 337.3ZM516.4 341.5L520.6 339.2L520.6 343.3L516.5 345.6ZM516.5 349.7L520.6 347.3L520.7 351.4L516.6 353.9ZM520.3 294.6L524.5 293.2L524.6 297.2L520.3 298.6ZM520.3 302.7L524.6 301.1L524.6 305.1L520.4 306.8ZM520.4 310.8L524.6 309.1L524.6 313.1L520.4 314.9ZM520.4 318.9L524.7 317.1L524.7 321.1L520.5 323.0ZM520.5 327.0L524.7 325.0L524.7 329.0L520.5 331.1ZM520.6 335.2L524.7 333.0L524.7 337.0L520.6 339.2ZM520.6 343.3L524.8 341.0L524.8 345.0L520.6 347.3ZM520.7 351.4L524.8 348.9L524.8 352.9L520.7 355.5ZM524.6 297.2L528.8 295.7L528.8 299.6L524.6 301.1ZM524.6 305.1L528.8 303.5L528.8 307.4L524.6 309.1ZM524.6 313.1L528.9 311.3L528.9 315.2L524.7 317.1ZM524.7 321.1L528.9 319.1L528.9 323.0L524.7 325.0ZM524.7 329.0L528.9 326.9L528.9 330.8L524.7 333.0ZM524.7 337.0L528.9 334.7L528.9 338.7L524.8 341.0ZM524.8 345.0L528.9 342.6L528.9 346.5L524.8 348.9ZM528.8 291.8L533.1 290.3L533.1 294.2L528.8 295.7ZM528.8 299.6L533.1 298.0L533.1 301.8L528.8 303.5ZM528.8 307.4L533.1 305.7L533.1 309.5L528.9 311.3ZM528.9 315.2L533.1 313.3L533.1 317.2L528.9 319.1ZM528.9 323.0L533.0 321.0L533.0 324.8L528.9 326.9ZM528.9 330.8L533.0 328.7L533.0 332.5L528.9 334.7ZM528.9 338.7L533.0 336.3L533.0 340.2L528.9 342.6ZM528.9 346.5L533.0 344.0L533.0 347.8L528.9 350.4ZM533.1 294.2L537.4 292.7L537.3 296.4L533.1 298.0ZM533.1 301.8L537.3 300.2L537.3 303.9L533.1 305.7ZM533.1 309.5L537.3 307.7L537.3 311.5L533.1 313.3ZM533.1 317.2L537.2 315.2L537.2 319.0L533.0 321.0ZM533.0 324.8L537.2 322.7L537.2 326.5L533.0 328.7ZM533.0 332.5L537.2 330.3L537.2 334.0L533.0 336.3ZM533.0 340.2L537.1 337.8L537.1 341.5L533.0 344.0ZM537.4 288.9L541.6 287.5L541.6 291.2L537.4 292.7ZM537.3 296.4L541.6 294.9L541.6 298.6L537.3 300.2ZM537.3 303.9L541.5 302.2L541.5 305.9L537.3 307.7ZM537.3 311.5L541.5 309.6L541.4 313.3L537.2 315.2ZM537.2 319.0L541.4 317.0L541.4 320.6L537.2 322.7ZM537.2 326.5L541.3 324.3L541.3 328.0L537.2 330.3ZM537.2 334.0L541.3 331.7L541.3 335.4L537.1 337.8ZM537.1 341.5L541.2 339.1L541.2 342.8L537.1 345.3ZM541.6 291.2L545.9 289.7L545.8 293.3L541.6 294.9ZM541.6 298.6L545.8 296.9L545.8 300.5L541.5 302.2ZM541.5 305.9L545.7 304.1L545.7 307.7L541.5 309.6ZM541.4 313.3L545.6 311.3L545.6 314.9L541.4 317.0ZM541.4 320.6L545.5 318.6L545.5 322.2L541.3 324.3ZM541.3 328.0L545.5 325.8L545.4 329.4L541.3 331.7ZM541.3 335.4L545.4 333.0L545.3 336.6L541.2 339.1ZM545.9 286.1L550.2 284.7L550.1 288.2L545.9 289.7ZM545.8 293.3L550.1 291.7L550.0 295.3L545.8 296.9ZM545.8 300.5L550.0 298.8L549.9 302.3L545.7 304.1ZM545.7 307.7L549.9 305.9L549.8 309.4L545.6 311.3ZM545.6 314.9L549.8 312.9L549.7 316.5L545.5 318.6ZM545.5 322.2L549.7 320.0L549.6 323.5L545.5 325.8ZM545.4 329.4L549.6 327.1L549.5 330.6L545.4 333.0ZM545.3 336.6L549.5 334.1L549.4 337.7L545.3 340.2ZM550.1 288.2L554.4 286.7L554.3 290.2L550.1 291.7ZM550.0 295.3L554.3 293.6L554.2 297.1L550.0 298.8ZM549.9 302.3L554.1 300.5L554.1 304.0L549.9 305.9ZM549.8 309.4L554.0 307.5L554.0 310.9L549.8 312.9ZM549.7 316.5L553.9 314.4L553.8 317.8L549.7 320.0ZM549.6 323.5L553.8 321.3L553.7 324.8L549.6 327.1ZM549.5 330.6L553.6 328.2L553.6 331.7L549.5 334.1ZM554.5 283.2L558.8 281.8L558.7 285.2L554.4 286.7ZM554.3 290.2L558.6 288.6L558.5 292.0L554.3 293.6ZM554.2 297.1L558.4 295.4L558.4 298.8L554.1 300.5ZM554.1 304.0L558.3 302.1L558.2 305.5L554.0 307.5ZM554.0 310.9L558.1 308.9L558.1 312.3L553.9 314.4ZM553.8 317.8L558.0 315.7L557.9 319.0L553.8 321.3ZM553.7 324.8L557.8 322.4L557.8 325.8L553.6 328.2ZM553.6 331.7L557.7 329.2L557.6 332.6L553.5 335.1ZM558.7 285.2L562.9 283.7L562.8 287.0L558.6 288.6ZM558.5 292.0L562.8 290.3L562.7 293.7L558.4 295.4ZM558.4 298.8L562.6 297.0L562.5 300.3L558.3 302.1ZM558.2 305.5L562.4 303.6L562.3 306.9L558.1 308.9ZM558.1 312.3L562.2 310.2L562.1 313.5L558.0 315.7ZM557.9 319.0L562.1 316.8L562.0 320.1L557.8 322.4ZM557.8 325.8L561.9 323.4L561.8 326.7L557.7 329.2ZM563.0 280.4L567.3 279.0L567.2 282.2L562.9 283.7ZM562.8 287.0L567.1 285.5L567.0 288.7L562.8 290.3ZM562.7 293.7L566.9 291.9L566.8 295.2L562.6 297.0ZM562.5 300.3L566.7 298.4L566.6 301.6L562.4 303.6ZM562.3 306.9L566.5 304.9L566.4 308.1L562.2 310.2ZM562.1 313.5L566.3 311.3L566.2 314.6L562.1 316.8ZM562.0 320.1L566.1 317.8L566.0 321.0L561.9 323.4ZM561.8 326.7L565.9 324.3L565.8 327.5L561.7 330.0Z" fill="#2fb6e8"/>
</g>
</g>
</g>
<rect x="366.500" y="130.500" width="320" height="240" fill="none" stroke="#8a8a8a" stroke-width="1"/>
</svg>
<div class="abs" style="left:686px;top:130px;color:#7a7a7a;line-height:14px">320,240</div>
<div class="abs" style="left:687px;top:360px;color:#cfcfcf;line-height:14px">FromC4D</div>
<!-- status + playback -->
<div class="abs" style="left:52px;top:408px;line-height:26px;color:#fff;white-space:pre;letter-spacing:.15px;text-shadow:0 0 .3px #fff">FromC4D 320x240 bbox: 0 0 320 240 channels: rgba,mask  x= 523 y=  31</div>
<div class="grip" style="left:46px;top:409px;height:23px"></div>
<svg style="left:995px;top:413px" width="11" height="6"><path d="M.5 0h10l-5 5z" fill="#fff"/></svg>
<div class="abs" style="left:44px;top:433px;width:23px;height:6px;border-radius:3px;background:#2a2a2a;border:1px solid #262626"></div><div class="abs" style="left:55px;top:434px;width:2px;height:2px;background:#e8e8e8"></div>
<div class="abs" style="left:44px;top:439px;width:23px;height:6px;border-radius:3px;background:#2a2a2a;border:1px solid #262626"></div><div class="abs" style="left:55px;top:440px;width:2px;height:2px;background:#e8e8e8"></div>
<div class="grip" style="left:46px;top:446px;height:24px"></div>
<div class="grip" style="left:46px;top:471px;height:30px"></div>
<div class="inp" style="left:54px;top:446px;width:56px;height:21px;line-height:22px;padding-left:3px">1</div>
<div class="btn" style="left:112px;top:446px;width:30px;height:20px;background:#2a2a2a;border-color:#3a3a3a"><svg style="left:8px;top:2px" width="13" height="15" viewBox="0 0 13 15"><path d="M3.500 6.500V4.500a3 3 0 0 1 6 0V6.500" fill="none" stroke="#000" stroke-width="1.800"/><rect x="1" y="6.500" width="11" height="7.500" fill="#000"/><rect x="6" y="8.500" width="1" height="3.500" fill="#2a2a2a"/></svg></div>
<div class="btn" style="left:253px;top:446px;width:279px;height:21px;background:linear-gradient(#545454,#4a4a4a)"></div>
<div class="abs" style="left:283.9px;top:447px;width:1px;height:19px;background:#2a2a2a"></div>
<div class="abs" style="left:314.9px;top:447px;width:1px;height:19px;background:#2a2a2a"></div>
<div class="abs" style="left:345.8px;top:447px;width:1px;height:19px;background:#2a2a2a"></div>
<div class="abs" style="left:376.7px;top:447px;width:1px;height:19px;background:#2a2a2a"></div>
<div class="abs" style="left:407.7px;top:447px;width:1px;height:19px;background:#2a2a2a"></div>
<div class="abs" style="left:438.6px;top:447px;width:1px;height:19px;background:#2a2a2a"></div>
<div class="abs" style="left:469.5px;top:447px;width:1px;height:19px;background:#2a2a2a"></div>
<div class="abs" style="left:500.5px;top:447px;width:1px;height:19px;background:#2a2a2a"></div>
<svg style="left:0;top:0" width="1011" height="500" viewBox="0 0 1011 500"><g fill="#000"><g transform="translate(268.5 456.500)"><path d="M-6 -6.500h2.600v13h-2.600zM6 -6.500v13l-8.500-6.500z"/></g><g transform="translate(299.4 456.500)"><path d="M7.500 -6.500v13l-8-6.500z"/><ellipse cx="-4.500" cy="4" rx="2.900" ry="2.100" fill="none" stroke="#000" stroke-width="1.600"/><path d="M-4.500 2v-8.800M-4.500 -6h3.200M-4.500 -3.600h2.600" stroke="#000" stroke-width="1.500" fill="none"/></g><g transform="translate(330.3 456.500)"><path d="M4 -6.500v13l-8.500-6.500z"/></g><g transform="translate(361.3 456.500)"><path d="M2 -6.500v13l-8.500-6.500zM3.800 -6.500h2.600v13h-2.600z"/></g><g transform="translate(392.2 456.500)"><rect x="-5.500" y="-5.500" width="11" height="11" rx="2"/></g><g transform="translate(423.1 456.500)"><path d="M-2 -6.500v13l8.500-6.500zM-3.800 -6.500h-2.600v13h2.600z"/></g><g transform="translate(454.1 456.500)"><path d="M-4 -6.500v13l8.500-6.500z"/></g><g transform="translate(485.0 456.500)"><path d="M-7.500 -6.500v13l8-6.500z"/><ellipse cx="4.500" cy="4" rx="2.900" ry="2.100" fill="none" stroke="#000" stroke-width="1.600"/><path d="M4.500 2v-8.800M4.500 -6h3.200M4.500 -3.600h2.600" stroke="#000" stroke-width="1.500" fill="none"/></g><g transform="translate(515.9 456.500)"><path d="M6 -6.500h-2.600v13h2.600zM-6 -6.500v13l8.500-6.500z"/></g></g></svg>
<div class="btn" style="left:541px;top:446px;width:94px;height:21px;background:linear-gradient(#545454,#4a4a4a)"></div>
<div class="inp" style="left:570px;top:446px;width:33px;height:21px;line-height:19px;border-radius:0;padding-left:5px">10</div>
<svg style="left:541px;top:446px" width="94" height="21" viewBox="0 0 94 21"><path d="M15 4v13l-9-6.500zM24 4v13l-9-6.500zM70 4v13l9-6.500zM79 4v13l9-6.500z" fill="#000"/></svg>
<div class="lbl" style="left:643px;top:446px;line-height:20px;color:#d8d8d8">fps</div>
<div class="inp" style="left:663px;top:446px;width:47px;height:21px;line-height:19px">24</div>
<div class="btn" style="left:713px;top:446px;width:29px;height:21px;background:linear-gradient(#4e4e4e,#454545)"><svg style="left:5px;top:3px" width="17" height="14" viewBox="0 0 17 14"><path d="M6.500 3.500h4.500a3.500 3.500 0 0 1 0 7h-5a3.500 3.500 0 0 1-1.500-6.600" fill="none" stroke="#000" stroke-width="1.800"/><path d="M9 .3v6.400l-4-3.200z" fill="#000"/></svg></div>
<div class="btn" style="left:854px;top:446px;width:29px;height:20px;background:linear-gradient(#4e4e4e,#454545)"><svg style="left:6px;top:3px" width="15" height="13" viewBox="0 0 15 13"><rect x=".500" y=".500" width="14" height="12" fill="#000"/><path d="M4 2.500v8l8-4z" fill="#5a5a5a"/></svg></div>
<div class="inp" style="left:886px;top:446px;width:99px;height:20px"></div>
<div class="btn" style="left:988px;top:446px;width:21px;height:20px;background:linear-gradient(#4e4e4e,#454545)"><svg style="left:1px;top:1px" width="18" height="17" viewBox="0 0 18 17"><path d="M7 1.500v8l6-4z" fill="#000"/><path d="M1.500 10v5.500h15V10M5.200 12.500v3M9 12.500v3M12.800 12.500v3" fill="none" stroke="#000" stroke-width="1.400"/></svg></div>
<div class="dd" style="left:54px;top:476px;width:71px;height:19px;line-height:19px"><span style="left:4px">Global</span><i style="right:6px"></i></div>
<div class="abs" style="left:127px;top:488px;width:882px;height:4px;background:#575757;border-top:1px solid #050505;border-bottom:1px solid #050505"></div>
<svg style="left:0;top:0" width="1011" height="510" viewBox="0 0 1011 510"><path d="M137.5 482V489M185.5 485.5V489M233.5 485.5V489M281.5 485.5V489M329.5 485.5V489M376.5 482V489M424.5 485.5V489M472.5 485.5V489M520.5 485.5V489M568.5 485.5V489M616.5 482V489M664.5 485.5V489M712.5 485.5V489M760.5 485.5V489M808.5 485.5V489M856.5 482V489M903.5 485.5V489M951.5 485.5V489M999.5 485.5V489" stroke="#828282" stroke-width="1" fill="none"/><path d="M137.500 478V493M999.500 478V499" stroke="#dcdcdc" stroke-width="1"/><path d="M138 480.500v7.500h8z" fill="#e24a2c"/><path d="M999 480.500v7.500h-8z" fill="#e24a2c"/><path d="M178 480h13.500l-6.750 7.500z" fill="#f09a20"/><path d="M184.500 487v3" stroke="#f09a20" stroke-width="1"/></svg>
<div class="tl" style="left:137px;top:491px">0</div>
<div class="tl" style="left:376px;top:491px">5</div>
<div class="tl" style="left:616px;top:491px">10</div>
<div class="tl" style="left:856px;top:491px">15</div>
<div class="tl" style="left:999px;top:491px">18</div>
<div class="tl" style="left:138px;top:471px;color:#e2502e">0</div>
<div class="tl" style="left:185px;top:471px;color:#f09a20">1</div>
<div class="tl" style="left:999px;top:471px;color:#e2502e">18</div>
<div class="abs" style="left:44px;top:504px;width:965px;height:1px;background:#0a0a0a"></div>
<div class="abs" style="left:44px;top:505px;width:965px;height:1px;background:#3c3c3c"></div>
<!-- node graph panel -->
<div class="abs" style="left:47px;top:506px;width:962px;height:24px;background:#333"></div>
<div class="abs" style="left:47px;top:529px;width:962px;height:1px;background:#2a2a2a"></div>
<div class="abs" style="left:47px;top:530px;width:962px;height:269px;background:#333"></div>
<div class="abs" style="left:46px;top:509px;width:16px;height:16px;background:#5c5c5c"><div class="abs" style="left:0;top:0;width:8px;height:9px;background:#cacaca"></div><div class="abs" style="left:0;top:9px;width:8px;height:7px;background:#8e8e8e"></div></div>
<div class="tab" style="left:156px;top:510px;width:93px;height:19px;background:#272727;border:1px solid #1c1c1c;border-bottom:none;border-radius:4px 4px 0 0;line-height:19px">Curve Editor</div>
<div class="tab" style="left:249px;top:510px;width:88px;height:19px;background:#272727;border:1px solid #1c1c1c;border-bottom:none;border-radius:4px 4px 0 0;line-height:19px">Dope Sheet</div>
<div class="tab" style="left:66px;top:507px;width:90px;height:24px;background:#333;border:1px solid #1c1c1c;border-bottom:none;border-radius:5px 5px 0 0;line-height:23px">Node Graph</div>
<svg style="left:979px;top:511px" width="26" height="11" viewBox="0 0 26 11"><g fill="none" stroke="#050505" stroke-width="1.500"><path d="M4 3V1.200h5.800v5.600H8"/><rect x="1.700" y="3.700" width="5.600" height="5.600"/><path d="M1.700 5.400h5.600" stroke-width="1"/><path d="M16.500 2.200l6.500 6.500M23 2.200l-6.500 6.500" stroke-width="1.700"/></g></svg>
<div class="abs" style="left:139px;top:621px;width:80px;height:76px;border:1px solid #000;background:linear-gradient(#fafafa,#ececec 8%,#8a8a8a)"></div><div class="abs" style="left:150px;top:623px;width:57px;height:43px;background:#000;overflow:hidden"><svg style="left:0;top:0" width="57" height="43" viewBox="0 0 57 43"><defs><filter id="tb" x="-50%" y="-50%" width="200%" height="200%"><feGaussianBlur stdDeviation="2.400"/></filter><filter id="tb2" x="-20%" y="-20%" width="140%" height="140%"><feGaussianBlur stdDeviation=".500"/></filter></defs><path d="M57 14L40 15L28 21L17 27L16 30L20 32L35 30L57 25Z" fill="#780000" filter="url(#tb)"/><g filter="url(#tb2)"><path d="M19.300 14.700L26.600 17L26.700 29.500L19.900 25.700Z" fill="#b86418"/><path d="M26.600 17L36.300 14.900L35.800 26.500L26.700 29.500Z" fill="#2a94c0"/><path d="M19.300 14.700L28.500 13.200L36.300 14.900L26.600 17Z" fill="#5a6a58"/></g></svg></div><div class="abs" style="left:119px;top:668px;width:120px;font-family:'Liberation Sans',sans-serif;font-size:10.5px;letter-spacing:-.2px;color:#000;white-space:nowrap;text-align:center;line-height:11px">test_diffuse<br>test_diffuse.mov</div><div class="abs" style="left:142.0px;top:692px;width:7.5px;height:3px;background:#e01818"></div><div class="abs" style="left:149.5px;top:692px;width:7.5px;height:3px;background:#18d818"></div><div class="abs" style="left:157.0px;top:692px;width:7.5px;height:3px;background:#1818d0"></div><div class="abs" style="left:164.5px;top:692px;width:7.5px;height:3px;background:#ffffff"></div>
<div class="abs" style="left:249px;top:573px;width:80px;height:76px;border:1px solid #000;background:linear-gradient(#fafafa,#ececec 8%,#8a8a8a)"></div><div class="abs" style="left:260px;top:575px;width:57px;height:43px;background:#000;overflow:hidden"></div><div class="abs" style="left:229px;top:620px;width:120px;font-family:'Liberation Sans',sans-serif;font-size:10.5px;letter-spacing:-.2px;color:#000;white-space:nowrap;text-align:center;line-height:11px">test_specular<br>test_specular.mov</div><div class="abs" style="left:252.0px;top:644px;width:7.5px;height:3px;background:#e01818"></div><div class="abs" style="left:259.5px;top:644px;width:7.5px;height:3px;background:#18d818"></div><div class="abs" style="left:267.0px;top:644px;width:7.5px;height:3px;background:#1818d0"></div><div class="abs" style="left:274.5px;top:644px;width:7.5px;height:3px;background:#ffffff"></div>
<div class="abs" style="left:359px;top:573px;width:80px;height:76px;border:1px solid #000;background:linear-gradient(#fafafa,#ececec 8%,#8a8a8a)"></div><div class="abs" style="left:370px;top:575px;width:57px;height:43px;background:#000;overflow:hidden"><svg style="left:0;top:0" width="57" height="43" viewBox="0 0 57 43"><rect width="57" height="43" fill="#fff"/><path d="M6 20L19 18.200L20.500 25.500L25.500 29.500Z" fill="#f8e400"/><path d="M18.400 21L20.500 25.500L19 20Z" fill="#e03010"/><path d="M36 18.200L46.600 20.400L36.400 26.400Z" fill="#20d8f0"/><path d="M26 29.500L35 26.800" stroke="#9ab" stroke-width=".6" stroke-dasharray="1 1.500"/></svg></div><div class="abs" style="left:339px;top:620px;width:120px;font-family:'Liberation Sans',sans-serif;font-size:10.5px;letter-spacing:-.2px;color:#000;white-space:nowrap;text-align:center;line-height:11px">test_shadow<br>test_shadow.mov</div><div class="abs" style="left:362.0px;top:644px;width:7.5px;height:3px;background:#e01818"></div><div class="abs" style="left:369.5px;top:644px;width:7.5px;height:3px;background:#18d818"></div><div class="abs" style="left:377.0px;top:644px;width:7.5px;height:3px;background:#1818d0"></div><div class="abs" style="left:384.5px;top:644px;width:7.5px;height:3px;background:#ffffff"></div>
<div class="abs" style="left:469px;top:573px;width:80px;height:76px;border:1px solid #000;background:linear-gradient(#fafafa,#ececec 8%,#8a8a8a)"></div><div class="abs" style="left:480px;top:575px;width:57px;height:43px;background:#000;overflow:hidden"></div><div class="abs" style="left:449px;top:620px;width:120px;font-family:'Liberation Sans',sans-serif;font-size:10.5px;letter-spacing:-.2px;color:#000;white-space:nowrap;text-align:center;line-height:11px">test_ambient<br>test_ambient.mov</div><div class="abs" style="left:472.0px;top:644px;width:7.5px;height:3px;background:#e01818"></div><div class="abs" style="left:479.5px;top:644px;width:7.5px;height:3px;background:#18d818"></div><div class="abs" style="left:487.0px;top:644px;width:7.5px;height:3px;background:#1818d0"></div><div class="abs" style="left:494.5px;top:644px;width:7.5px;height:3px;background:#ffffff"></div>
<div class="abs" style="left:579px;top:573px;width:80px;height:76px;border:1px solid #000;background:linear-gradient(#fafafa,#ececec 8%,#8a8a8a)"></div><div class="abs" style="left:590px;top:575px;width:57px;height:43px;background:#000;overflow:hidden"><svg style="left:0;top:0" width="57" height="43" viewBox="0 0 57 43"><path d="M20 27.500L26.700 30.500L26.700 40L21 34Z" fill="#34160a"/><path d="M26.700 30.500L35.600 27.800L35.300 35L26.700 40Z" fill="#0a2434"/></svg></div><div class="abs" style="left:559px;top:620px;width:120px;font-family:'Liberation Sans',sans-serif;font-size:10.5px;letter-spacing:-.2px;color:#000;white-space:nowrap;text-align:center;line-height:11px">test_refl<br>test_refl.mov</div><div class="abs" style="left:582.0px;top:644px;width:7.5px;height:3px;background:#e01818"></div><div class="abs" style="left:589.5px;top:644px;width:7.5px;height:3px;background:#18d818"></div><div class="abs" style="left:597.0px;top:644px;width:7.5px;height:3px;background:#1818d0"></div><div class="abs" style="left:604.5px;top:644px;width:7.5px;height:3px;background:#ffffff"></div>
<div class="abs" style="left:689px;top:573px;width:80px;height:76px;border:1px solid #000;background:linear-gradient(#fafafa,#ececec 8%,#8a8a8a)"></div><div class="abs" style="left:700px;top:575px;width:57px;height:43px;background:#000;overflow:hidden"><svg style="left:0;top:0" width="57" height="43" viewBox="0 0 57 43"><defs><linearGradient id="dg" x1="0" y1="0" x2="0" y2="1"><stop offset="0" stop-color="#000"/><stop offset="1" stop-color="#a8a8a8"/></linearGradient></defs><rect y="25" width="57" height="18" fill="url(#dg)"/><path d="M19.500 15L28 13.500L36.500 15L35.500 26.500L27 29L20.500 26Z" fill="#4c4c4c"/><path d="M19.500 15L27 16.800L27 29L20.500 26Z" fill="#5a5a5a"/></svg></div><div class="abs" style="left:669px;top:620px;width:120px;font-family:'Liberation Sans',sans-serif;font-size:10.5px;letter-spacing:-.2px;color:#000;white-space:nowrap;text-align:center;line-height:11px">test_depth<br>test_depth.mov</div><div class="abs" style="left:692.0px;top:644px;width:7.5px;height:3px;background:#e01818"></div><div class="abs" style="left:699.5px;top:644px;width:7.5px;height:3px;background:#18d818"></div><div class="abs" style="left:707.0px;top:644px;width:7.5px;height:3px;background:#1818d0"></div><div class="abs" style="left:714.5px;top:644px;width:7.5px;height:3px;background:#ffffff"></div>
<div class="abs" style="left:799px;top:573px;width:80px;height:76px;border:1px solid #000;background:linear-gradient(#fafafa,#ececec 8%,#8a8a8a)"></div><div class="abs" style="left:810px;top:575px;width:57px;height:43px;background:#000;overflow:hidden"><svg style="left:0;top:0" width="57" height="43" viewBox="0 0 57 43"><rect width="57" height="43" fill="#b00000"/><rect width="57" height="2" fill="#180000"/><path d="M19 15L28 13L36.500 15L36 26.500L27 29.500L20 26Z" fill="#c4c4c4"/><path d="M19 15L27 17L27 29.500L20 26Z" fill="#a8a8a8"/><path d="M19 15L28 13L36.500 15L27 17Z" fill="#dcdcdc"/></svg></div><div class="abs" style="left:779px;top:620px;width:120px;font-family:'Liberation Sans',sans-serif;font-size:10.5px;letter-spacing:-.2px;color:#000;white-space:nowrap;text-align:center;line-height:11px">test_matcolor<br>test_matcolor.mov</div><div class="abs" style="left:802.0px;top:644px;width:7.5px;height:3px;background:#e01818"></div><div class="abs" style="left:809.5px;top:644px;width:7.5px;height:3px;background:#18d818"></div><div class="abs" style="left:817.0px;top:644px;width:7.5px;height:3px;background:#1818d0"></div><div class="abs" style="left:824.5px;top:644px;width:7.5px;height:3px;background:#ffffff"></div>
<div class="abs" style="left:909px;top:573px;width:80px;height:76px;border:1px solid #000;background:linear-gradient(#fafafa,#ececec 8%,#8a8a8a)"></div><div class="abs" style="left:920px;top:575px;width:57px;height:43px;background:#000;overflow:hidden"><svg style="left:0;top:0" width="57" height="43" viewBox="0 0 57 43"><defs><filter id="tb" x="-50%" y="-50%" width="200%" height="200%"><feGaussianBlur stdDeviation="2.400"/></filter><filter id="tb2" x="-20%" y="-20%" width="140%" height="140%"><feGaussianBlur stdDeviation=".500"/></filter></defs><path d="M57 16L42 16L30 22L17 28L16 31L22 34L37 31L57 27Z" fill="#780000" filter="url(#tb)"/><path d="M36 19L48 22L37 27Z" fill="#000" opacity=".8"/><g filter="url(#tb2)"><path d="M19.300 14.700L26.600 17L26.700 29.500L19.900 25.700Z" fill="#b86418"/><path d="M26.600 17L36.300 14.900L35.800 26.500L26.700 29.500Z" fill="#2a94c0"/><path d="M19.300 14.700L28.500 13.200L36.300 14.900L26.600 17Z" fill="#5a6a58"/></g><path d="M19.900 25.700L26.700 29.500L26.800 40L20.600 34.600Z" fill="#70300c" opacity=".8"/><path d="M26.700 29.500L35.800 26.500L35.600 35L26.800 40Z" fill="#28506a" opacity=".8"/></svg></div><div class="abs" style="left:889px;top:620px;width:120px;font-family:'Liberation Sans',sans-serif;font-size:10.5px;letter-spacing:-.2px;color:#000;white-space:nowrap;text-align:center;line-height:11px">test<br>test.mov</div><div class="abs" style="left:912.0px;top:644px;width:7.5px;height:3px;background:#e01818"></div><div class="abs" style="left:919.5px;top:644px;width:7.5px;height:3px;background:#18d818"></div><div class="abs" style="left:927.0px;top:644px;width:7.5px;height:3px;background:#1818d0"></div><div class="abs" style="left:934.5px;top:644px;width:7.5px;height:3px;background:#ffffff"></div>
<div class="abs" style="left:249px;top:669px;width:80px;height:18px;border:1px solid #000;background:linear-gradient(#5e6de0,#3644a0)"></div><div class="abs" style="left:209px;top:671px;width:160px;font-family:'Liberation Sans',sans-serif;font-size:10.5px;letter-spacing:-.2px;color:#000;white-space:nowrap;text-align:center;line-height:11px">Merge_test_specular (plus)</div><div class="abs" style="left:252.0px;top:682px;width:7.5px;height:3px;background:#e01818"></div><div class="abs" style="left:259.5px;top:682px;width:7.5px;height:3px;background:#18d818"></div><div class="abs" style="left:267.0px;top:682px;width:7.5px;height:3px;background:#1818d0"></div><div class="abs" style="left:274.5px;top:682px;width:7.5px;height:3px;background:#ffffff"></div>
<div class="abs" style="left:359px;top:693px;width:80px;height:28px;border:1px solid #000;background:linear-gradient(#5e6de0,#3644a0)"></div><div class="abs" style="left:319px;top:693.5px;width:160px;font-family:'Liberation Sans',sans-serif;font-size:10.5px;letter-spacing:-.2px;color:#000;white-space:nowrap;text-align:center;line-height:11px;line-height:12.3px">Merge_test_shadow (over)<br>(mask)</div>
<div class="abs" style="left:364px;top:716px;width:2px;height:3px;background:#d02020"></div>
<div class="abs" style="left:372px;top:716px;width:2px;height:3px;background:#20d020"></div>
<div class="abs" style="left:379px;top:716px;width:2px;height:3px;background:#2020e0"></div>
<div class="abs" style="left:386px;top:716px;width:2px;height:3px;background:#fff"></div>
<div class="abs" style="left:432px;top:716px;width:2px;height:3px;background:#20a040"></div>
<div class="abs" style="left:469px;top:717px;width:80px;height:18px;border:1px solid #000;background:linear-gradient(#5e6de0,#3644a0)"></div><div class="abs" style="left:429px;top:719px;width:160px;font-family:'Liberation Sans',sans-serif;font-size:10.5px;letter-spacing:-.2px;color:#000;white-space:nowrap;text-align:center;line-height:11px">Merge_test_ambient (plus)</div><div class="abs" style="left:472.0px;top:730px;width:7.5px;height:3px;background:#e01818"></div><div class="abs" style="left:479.5px;top:730px;width:7.5px;height:3px;background:#18d818"></div><div class="abs" style="left:487.0px;top:730px;width:7.5px;height:3px;background:#1818d0"></div><div class="abs" style="left:494.5px;top:730px;width:7.5px;height:3px;background:#ffffff"></div>
<div class="abs" style="left:541px;top:730px;width:2px;height:3px;background:#20a040"></div>
<div class="abs" style="left:579px;top:717px;width:80px;height:18px;border:1px solid #000;background:linear-gradient(#5e6de0,#3644a0)"></div><div class="abs" style="left:539px;top:719px;width:160px;font-family:'Liberation Sans',sans-serif;font-size:10.5px;letter-spacing:-.2px;color:#000;white-space:nowrap;text-align:center;line-height:11px">Merge_test_refl (plus)</div><div class="abs" style="left:582.0px;top:730px;width:7.5px;height:3px;background:#e01818"></div><div class="abs" style="left:589.5px;top:730px;width:7.5px;height:3px;background:#18d818"></div><div class="abs" style="left:597.0px;top:730px;width:7.5px;height:3px;background:#1818d0"></div><div class="abs" style="left:604.5px;top:730px;width:7.5px;height:3px;background:#ffffff"></div>
<div class="abs" style="left:651px;top:730px;width:2px;height:3px;background:#20a040"></div>
<div class="abs" style="left:579px;top:741px;width:80px;height:26px;border:1px solid #000;background:linear-gradient(#e4e400,#c8c800 40%,#8c8c00)"></div>
<div class="abs" style="left:559px;top:743px;width:120px;font-family:'Liberation Sans',sans-serif;font-size:10.5px;letter-spacing:-.2px;color:#000;white-space:nowrap;text-align:center;line-height:11px">C4DWrite<br>(all)</div>
<div class="abs" style="left:582.0px;top:764px;width:7.5px;height:2px;background:#e01818"></div><div class="abs" style="left:589.5px;top:764px;width:7.5px;height:2px;background:#18d818"></div><div class="abs" style="left:597.0px;top:764px;width:7.5px;height:2px;background:#1818d0"></div><div class="abs" style="left:604.5px;top:764px;width:7.5px;height:2px;background:#ffffff"></div>
<div class="abs" style="left:648px;top:764px;width:8px;height:2px;background:#208020"></div>
<svg style="left:0;top:0" width="1011" height="799" viewBox="0 0 1011 799"><defs><linearGradient id="vg" x1="0" y1="0" x2="0" y2="1"><stop offset="0" stop-color="#f4f4f4"/><stop offset="1" stop-color="#8e8e8e"/></linearGradient></defs><path d="M582 766.500h74.500l3.500 6.500-3.500 9h-74.500l-3.500-9z" fill="url(#vg)" stroke="#1a1a1a" stroke-width=".8"/><path d="M575 770l3.500 3.500-3.500 3.500z" fill="#000"/></svg>
<div class="abs" style="left:559px;top:768px;width:120px;font-family:'Liberation Sans',sans-serif;font-size:10.5px;letter-spacing:-.2px;color:#000;white-space:nowrap;text-align:center;line-height:11px">C4DViewer</div>
<!-- arrows -->
<svg style="left:0;top:0" width="1011" height="799" viewBox="0 0 1011 799">
<path d="M289.0 649.0L289.0 659.0" stroke="#f3ab5c" stroke-width="2" fill="none"/><path d="M289.0 669.0L285.0 659.0L289.0 656.0L293.0 659.0Z" fill="#f3ab5c"/>
<path d="M399.0 649.0L399.0 683.0" stroke="#f3ab5c" stroke-width="2" fill="none"/><path d="M399.0 693.0L395.0 683.0L399.0 680.0L403.0 683.0Z" fill="#f3ab5c"/>
<path d="M509.0 649.0L509.0 707.0" stroke="#f3ab5c" stroke-width="2" fill="none"/><path d="M509.0 717.0L505.0 707.0L509.0 704.0L513.0 707.0Z" fill="#f3ab5c"/>
<path d="M619.0 649.0L619.0 707.0" stroke="#f3ab5c" stroke-width="2" fill="none"/><path d="M619.0 717.0L615.0 707.0L619.0 704.0L623.0 707.0Z" fill="#f3ab5c"/>
<path d="M219.0 665.5L239.2 669.9" stroke="#f3ab5c" stroke-width="2" fill="none"/><path d="M249.0 672.0L238.5 673.4L236.3 669.2L240.0 666.4Z" fill="#f3ab5c"/>
<path d="M322.4 686.8L349.3 693.3" stroke="#f3ab5c" stroke-width="2" fill="none"/><path d="M359.0 695.6L348.4 696.8L346.4 692.6L350.1 689.8Z" fill="#f3ab5c"/>
<path d="M438.5 713.0L459.2 717.5" stroke="#f3ab5c" stroke-width="2" fill="none"/><path d="M469.0 719.6L458.5 721.0L456.3 716.9L460.0 714.0Z" fill="#f3ab5c"/>
<path d="M549.0 725.5L567.0 725.5" stroke="#f3ab5c" stroke-width="2" fill="none"/><path d="M574.0 725.5L567.0 728.7L564.0 725.5L567.0 722.3Z" fill="#f3ab5c"/>
<path d="M615 736h8l-4 4.500zM245 675l3.2 3l-3.2 3zM332.5 675l-3.2 3l3.2 3zM355.5 703.5l3.2 3l-3.2 3zM442.5 703.5l-3.2 3l3.2 3zM465.5 722.5l3.2 3l-3.2 3zM552 722.5l-3.2 3l3.2 3zM575.5 722.5l3.2 3l-3.2 3zM662.5 722.5l-3.2 3l3.2 3z" fill="#f3ab5c"/>
<path d="M725.500 649h7.500l-3.750 7zM835.500 649h7.500l-3.750 7zM945.500 649h7.500l-3.750 7z" fill="#000"/>
<text x="287.3" y="657.5" font-family="Liberation Sans,sans-serif" font-size="10.500" text-anchor="middle" fill="#fff" stroke="#222" stroke-width=".3" paint-order="stroke">A</text>
<text x="397" y="682" font-family="Liberation Sans,sans-serif" font-size="10.500" text-anchor="middle" fill="#fff" stroke="#222" stroke-width=".3" paint-order="stroke">A</text>
<text x="507" y="706" font-family="Liberation Sans,sans-serif" font-size="10.500" text-anchor="middle" fill="#fff" stroke="#222" stroke-width=".3" paint-order="stroke">A</text>
<text x="617" y="706" font-family="Liberation Sans,sans-serif" font-size="10.500" text-anchor="middle" fill="#fff" stroke="#222" stroke-width=".3" paint-order="stroke">A</text>
<text x="232.7" y="673.5" font-family="Liberation Sans,sans-serif" font-size="10.500" text-anchor="middle" fill="#fff" stroke="#222" stroke-width=".3" paint-order="stroke">B</text>
<text x="342.5" y="697.5" font-family="Liberation Sans,sans-serif" font-size="10.500" text-anchor="middle" fill="#fff" stroke="#222" stroke-width=".3" paint-order="stroke">B</text>
<text x="453" y="721.5" font-family="Liberation Sans,sans-serif" font-size="10.500" text-anchor="middle" fill="#fff" stroke="#222" stroke-width=".3" paint-order="stroke">B</text>
<text x="562.5" y="729.5" font-family="Liberation Sans,sans-serif" font-size="10.500" text-anchor="middle" fill="#fff" stroke="#222" stroke-width=".3" paint-order="stroke">B</text>
</svg>
</body></html>
